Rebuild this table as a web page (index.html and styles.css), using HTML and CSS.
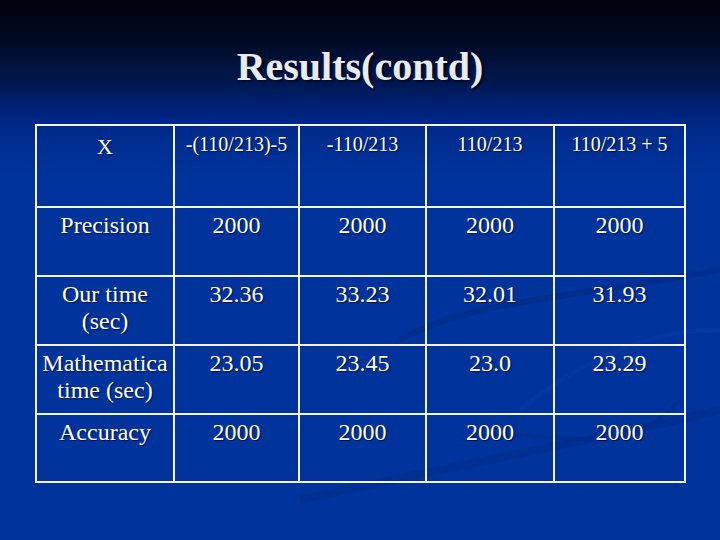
FILE: index.html
```html
<!DOCTYPE html>
<html>
<head>
<meta charset="utf-8">
<link rel="stylesheet" href="styles.css">
</head>
<body>
<div class="slide">
  <svg class="swoosh" width="720" height="540" viewBox="0 0 720 540" aria-hidden="true">
    <path d="M400 340 C 470 300, 560 300, 720 270" fill="none" stroke="#00287e" stroke-width="6" opacity="0.45"/>
    <path d="M520 410 C 580 360, 650 330, 720 330" fill="none" stroke="#0a3ca8" stroke-width="5" opacity="0.5"/>
    <path d="M300 500 C 430 470, 600 440, 720 410" fill="none" stroke="#00287e" stroke-width="8" opacity="0.35"/>
    <path d="M460 440 C 540 420, 620 470, 680 400" fill="none" stroke="#00287e" stroke-width="4" opacity="0.3"/>
  </svg>
  <h1 class="title">Results(contd)</h1>
  <table class="results">
    <colgroup>
      <col class="c1"><col class="c2"><col class="c3"><col class="c4"><col class="c5">
    </colgroup>
    <tr class="head">
      <td class="x">X</td>
      <td>-(110/213)-5</td>
      <td>-110/213</td>
      <td>110/213</td>
      <td>110/213 + 5</td>
    </tr>
    <tr>
      <td>Precision</td>
      <td>2000</td><td>2000</td><td>2000</td><td>2000</td>
    </tr>
    <tr>
      <td>Our time<br>(sec)</td>
      <td>32.36</td><td>33.23</td><td>32.01</td><td>31.93</td>
    </tr>
    <tr>
      <td>Mathematica<br>time (sec)</td>
      <td>23.05</td><td>23.45</td><td>23.0</td><td>23.29</td>
    </tr>
    <tr class="last">
      <td>Accuracy</td>
      <td>2000</td><td>2000</td><td>2000</td><td>2000</td>
    </tr>
  </table>
</div>
</body>
</html>
```
FILE: styles.css
```css
html, body {
  margin: 0;
  padding: 0;
}
body {
  width: 720px;
  height: 540px;
  overflow: hidden;
  background: linear-gradient(to bottom, #00030d 0px, #000a24 40px, #00164c 80px, #00237a 110px, #002c8e 135px, #00339c 180px, #00339c 540px);
  font-family: "Liberation Serif", "Times New Roman", serif;
}
.slide {
  position: relative;
  width: 720px;
  height: 540px;
  display: flex;
  flex-direction: column;
  align-items: center;
}
.swoosh {
  position: absolute;
  left: 0;
  top: 0;
  z-index: 0;
}
.title {
  position: relative;
  z-index: 1;
  margin: 45px 0 0 0;
  font-size: 40px;
  font-weight: bold;
  line-height: 44px;
  color: #e8eaf4;
  text-shadow: 2px 2px 2px rgba(0, 0, 0, 0.6);
}
.results {
  position: relative;
  z-index: 1;
  margin: 35px 0 0 1px;
  border-collapse: collapse;
  table-layout: fixed;
  width: 651px;
}
.c1 { width: 138px; }
.c2 { width: 125px; }
.c3 { width: 127px; }
.c4 { width: 128px; }
.c5 { width: 131px; }
.results td {
  border: 2px solid #f4f4f4;
  color: #ffffff;
  font-size: 24px;
  text-align: center;
  vertical-align: top;
  padding: 4px 0 0 0;
  height: 69px;
  box-sizing: border-box;
  text-shadow: 1px 1px 1px rgba(0, 0, 30, 0.7);
  white-space: nowrap;
}
.results .head td {
  font-size: 20px;
  height: 82px;
  padding-top: 7px;
}
.results .head td.x {
  font-size: 22px;
  padding-top: 8px;
}
.results .last td {
  height: 68px;
}
```
